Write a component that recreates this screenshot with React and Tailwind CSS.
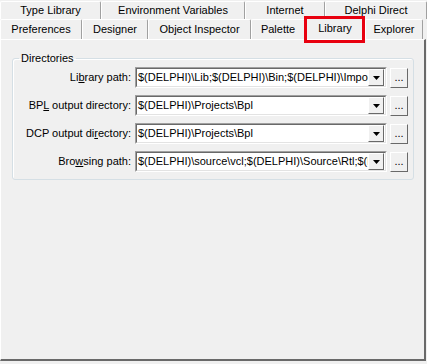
const topTabs = [
  { label: "Type Library", w: 101 },
  { label: "Environment Variables", w: 144 },
  { label: "Internet", w: 80 },
  { label: "Delphi Direct", w: 102 },
];

const bottomTabs = [
  { label: "Preferences", w: 82 },
  { label: "Designer", w: 66 },
  { label: "Object Inspector", w: 103 },
  { label: "Palette", w: 54 },
  { label: "Library", w: 60, active: true },
  { label: "Explorer", w: 58 },
];

const rows = [
  { pre: "Li", key: "b", post: "rary path:", value: "$(DELPHI)\\Lib;$(DELPHI)\\Bin;$(DELPHI)\\Imports;$(BDS)\\Lib" },
  { pre: "BP", key: "L", post: " output directory:", value: "$(DELPHI)\\Projects\\Bpl" },
  { pre: "DCP output di", key: "r", post: "ectory:", value: "$(DELPHI)\\Projects\\Bpl" },
  { pre: "Bro", key: "w", post: "sing path:", value: "$(DELPHI)\\source\\vcl;$(DELPHI)\\Source\\Rtl;$(DELPHI)" },
];

function Tab({ label, w, active }) {
  return (
    <div
      style={{ width: w }}
      className={
        "shrink-0 flex items-center justify-center border-l border-t border-r border-l-white border-t-white border-r-[#a0a0a0] rounded-t-[2px] " +
        (active ? "bg-[#f0f0f0] h-[22px] -mt-[2px] relative z-10" : "bg-[#f0f0f0] h-full")
      }
    >
      {label}
    </div>
  );
}

function Combo({ value }) {
  return (
    <div className="flex h-[21px] w-[252px] border border-t-[#a0a0a0] border-l-[#a0a0a0] border-r-white border-b-white">
      <div className="flex flex-1 min-w-0 border border-t-[#696969] border-l-[#696969] border-r-[#e3e3e3] border-b-[#e3e3e3] bg-white">
        <div className="flex-1 min-w-0 overflow-hidden whitespace-nowrap pl-[1px] leading-[17px]">{value}</div>
        <div className="w-[16px] h-[17px] mr-[1px] flex items-center justify-center bg-[#f0f0f0] border border-t-white border-l-white border-r-[#696969] border-b-[#696969]">
          <svg width="7" height="4" viewBox="0 0 7 4">
            <path d="M0 0h7L3.5 4z" fill="#000" />
          </svg>
        </div>
      </div>
    </div>
  );
}

export default function App() {
  return (
    <div
      className="w-[427px] h-[364px] bg-[#f0f0f0] overflow-hidden text-[11px] text-black"
      style={{ fontFamily: "Tahoma, 'Liberation Sans', Arial, sans-serif" }}
    >
      {/* tab rows */}
      <div className="flex h-[19px] pt-[1px]">
        {topTabs.map((t) => (
          <Tab key={t.label} {...t} />
        ))}
      </div>
      <div className="flex h-[20px]">
        {bottomTabs.map((t) => (
          <div key={t.label} className="relative">
            <Tab {...t} />
            {t.active && (
              <div className="absolute -left-[1px] -top-[3px] w-[61px] h-[27px] border-[3px] border-[#e8000f] z-20" />
            )}
          </div>
        ))}
      </div>

      {/* page */}
      <div className="h-[322px] w-[426px] border-l border-t border-r-2 border-b-2 border-l-white border-t-white border-r-[#696969] border-b-[#696969] pt-[12px] pl-[11px] pr-[10px]">
        <fieldset className="border border-[#d5dfe5] rounded-[3px] h-[128px] px-0 pt-[3px] shadow-[inset_1px_1px_0_#fff]">
          <legend className="ml-[6px] px-[2px] leading-[12px]">Directories</legend>
          <div className="flex flex-col gap-[7px]">
            {rows.map((r) => (
              <div key={r.pre} className="flex items-center h-[21px]">
                <div className="w-[122px] text-right pr-[4px] whitespace-nowrap">
                  {r.pre}
                  <span className="underline">{r.key}</span>
                  {r.post}
                </div>
                <Combo value={r.value} />
                <div className="ml-[3px] w-[18px] h-[20px] flex items-end justify-center pb-[4px] bg-[#f0f0f0] border border-t-white border-l-white border-r-[#696969] border-b-[#696969] leading-none">
                  ...
                </div>
              </div>
            ))}
          </div>
        </fieldset>
      </div>
    </div>
  );
}
